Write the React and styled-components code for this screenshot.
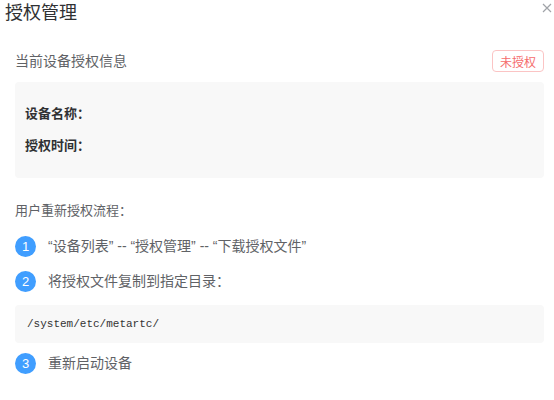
import React from "react";
import styled, { createGlobalStyle } from "styled-components";

const GlobalStyle = createGlobalStyle`
  html, body { margin: 0; padding: 0; background: #fff; }
  body {
    font-family: "Liberation Sans", "Noto Sans CJK SC", sans-serif;
    -webkit-font-smoothing: antialiased;
  }
  * { box-sizing: border-box; }
`;

const Dialog = styled.div`
  width: 554px;
  height: 400px;
  background: #fff;
  overflow: hidden;
`;

const Header = styled.div`
  display: flex;
  justify-content: space-between;
  align-items: flex-start;
  padding: 0 2px 0 5px;
  height: 26px;
`;

const Title = styled.div`
  font-size: 18px;
  line-height: 26px;
  color: #303133;
`;

const CloseButton = styled.button`
  border: 0;
  background: none;
  padding: 0;
  margin-top: 3px;
  width: 10px;
  height: 10px;
  display: flex;
  cursor: pointer;
`;

const Body = styled.div`
  padding: 0 10px 0 15px;
`;

const SectionRow = styled.div`
  display: flex;
  justify-content: space-between;
  align-items: center;
  margin-top: 24px;
  height: 22px;
`;

const SectionTitle = styled.div`
  font-size: 14px;
  color: #606266;
  line-height: 22px;
`;

const Tag = styled.span`
  display: inline-flex;
  align-items: center;
  height: 22px;
  padding: 0 7px;
  font-size: 12px;
  color: #f56c6c;
  background: #fff;
  border: 1px solid #fbc4c4;
  border-radius: 4px;
`;

const InfoBox = styled.div`
  margin-top: 10px;
  background: #f8f8f8;
  border-radius: 4px;
  padding: 22px 10px;
  display: flex;
  flex-direction: column;
  gap: 12px;
`;

const InfoLabel = styled.div`
  font-size: 13px;
  font-weight: bold;
  line-height: 20px;
  color: #303133;
`;

const FlowTitle = styled.div`
  margin-top: 23px;
  font-size: 13px;
  line-height: 20px;
  color: #606266;
`;

const StepRow = styled.div`
  display: flex;
  align-items: center;
  gap: 12px;
  height: 22px;
  margin-top: ${(p) => p.$top}px;
`;

const StepNum = styled.span`
  width: 21px;
  height: 21px;
  border-radius: 50%;
  background: #409eff;
  color: #fff;
  font-size: 13px;
  font-family: "Liberation Sans", Arial, sans-serif;
  display: flex;
  align-items: center;
  justify-content: center;
  flex: none;
`;

const StepText = styled.span`
  font-size: 14px;
  color: #606266;
  line-height: 22px;
`;

const CodeBox = styled.div`
  margin-top: 13px;
  height: 38px;
  background: #f8f8f8;
  border-radius: 4px;
  display: flex;
  align-items: center;
  padding: 0 12px;
  font-family: "Liberation Mono", monospace;
  font-size: 11px;
  color: #333;
`;

export default function App() {
  return (
    <>
      <GlobalStyle />
      <Dialog>
        <Header>
          <Title>授权管理</Title>
          <CloseButton aria-label="关闭">
            <svg width="10" height="10" viewBox="0 0 10 10">
              <path d="M1 1 L9 9 M9 1 L1 9" stroke="#a0a3a8" strokeWidth="1.2" fill="none" />
            </svg>
          </CloseButton>
        </Header>
        <Body>
          <SectionRow>
            <SectionTitle>当前设备授权信息</SectionTitle>
            <Tag>未授权</Tag>
          </SectionRow>
          <InfoBox>
            <InfoLabel>设备名称：</InfoLabel>
            <InfoLabel>授权时间：</InfoLabel>
          </InfoBox>
          <FlowTitle>用户重新授权流程：</FlowTitle>
          <StepRow $top={14}>
            <StepNum>1</StepNum>
            <StepText>“设备列表” -- “授权管理” -- “下载授权文件”</StepText>
          </StepRow>
          <StepRow $top={13}>
            <StepNum>2</StepNum>
            <StepText>将授权文件复制到指定目录：</StepText>
          </StepRow>
          <CodeBox>/system/etc/metartc/</CodeBox>
          <StepRow $top={9}>
            <StepNum>3</StepNum>
            <StepText>重新启动设备</StepText>
          </StepRow>
        </Body>
      </Dialog>
    </>
  );
}
